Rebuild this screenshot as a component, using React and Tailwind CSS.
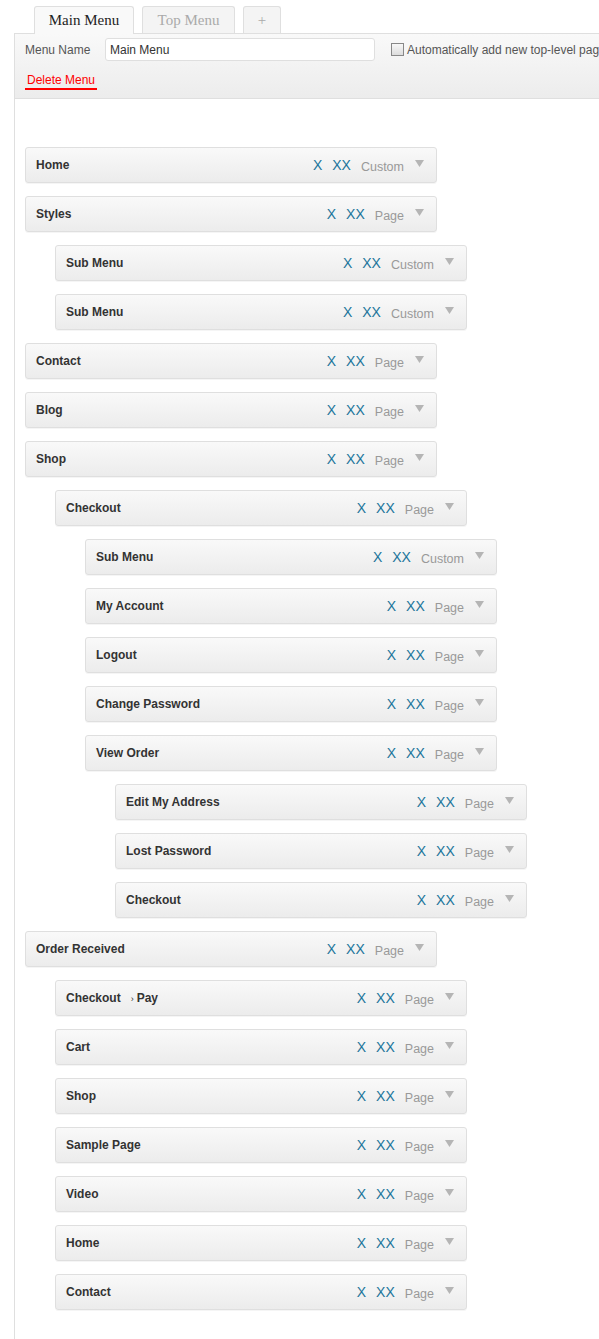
import React from "react";

const items = [
  [0, "Home", "Custom"],
  [0, "Styles", "Page"],
  [1, "Sub Menu", "Custom"],
  [1, "Sub Menu", "Custom"],
  [0, "Contact", "Page"],
  [0, "Blog", "Page"],
  [0, "Shop", "Page"],
  [1, "Checkout", "Page"],
  [2, "Sub Menu", "Custom"],
  [2, "My Account", "Page"],
  [2, "Logout", "Page"],
  [2, "Change Password", "Page"],
  [2, "View Order", "Page"],
  [3, "Edit My Address", "Page"],
  [3, "Lost Password", "Page"],
  [3, "Checkout", "Page"],
  [0, "Order Received", "Page"],
  [1, "Checkout|Pay", "Page"],
  [1, "Cart", "Page"],
  [1, "Shop", "Page"],
  [1, "Sample Page", "Page"],
  [1, "Video", "Page"],
  [1, "Home", "Page"],
  [1, "Contact", "Page"],
];

const indent = ["ml-0", "ml-[30px]", "ml-[60px]", "ml-[90px]"];

function MenuItem({ level, label, type }) {
  const [main, sub] = label.split("|");
  return (
    <div
      className={`${indent[level]} w-[412px] h-[36px] flex items-center pl-[10px] pr-[12px] border border-[#dfdfdf] rounded-[3px] bg-gradient-to-b from-[#f9f9f9] to-[#ececec] shadow-[0_1px_0_rgba(0,0,0,0.04)]`}
    >
      <div className="flex-1 text-[12px] font-bold text-[#333] leading-none">
        {main}
        {sub && (
          <>
            <span className="ml-[10px] mr-[3px] text-[9px] font-normal">›</span>
            {sub}
          </>
        )}
      </div>
      <span className="text-[14px] text-[#21759b] leading-none">X</span>
      <span className="ml-[10px] text-[14px] text-[#21759b] leading-none">XX</span>
      <span className="ml-[10px] mt-[4px] text-[12.5px] text-[#999] leading-none">{type}</span>
      <svg className="ml-[11px] -mt-[3px]" width="9" height="7" viewBox="0 0 9 7">
        <path d="M0 0 H9 L4.5 7 Z" fill="#b5b5b5" />
      </svg>
    </div>
  );
}

export default function App() {
  return (
    <div className="min-h-screen bg-white overflow-hidden font-['Liberation_Sans',Arial,sans-serif]">
      <div className="flex items-end gap-[8px] ml-[34px] pt-[6px] h-[33px] relative z-10">
        <div className="h-[28px] w-[100px] flex items-center justify-center border border-b-0 border-[#dfdfdf] rounded-t-[3px] bg-[#f9f9f9] font-['Liberation_Serif',Georgia,serif] text-[15px] text-[#222] -mb-px">
          Main Menu
        </div>
        <div className="h-[27px] w-[93px] flex items-center justify-center border border-b-0 border-[#dfdfdf] rounded-t-[3px] bg-[#f4f4f4] font-['Liberation_Serif',Georgia,serif] text-[15px] text-[#aaa]">
          Top Menu
        </div>
        <div className="h-[27px] w-[38px] flex items-center justify-center border border-b-0 border-[#dfdfdf] rounded-t-[3px] bg-[#f4f4f4] font-['Liberation_Serif',Georgia,serif] text-[15px] text-[#aaa]">
          +
        </div>
      </div>
      <div className="ml-[14px] border-l border-[#dfdfdf] min-h-[1306px]">
        <div className="h-[66px] border-t border-b border-[#dfdfdf] bg-gradient-to-b from-[#f9f9f9] to-[#ececec] pl-[10px] overflow-hidden">
          <div className="flex items-center pt-[4px] whitespace-nowrap">
            <span className="w-[80px] shrink-0 text-[12px] text-[#555]">Menu Name</span>
            <div className="w-[270px] shrink-0 h-[23px] flex items-center px-[4px] bg-white border border-[#dfdfdf] rounded-[3px] text-[12px] text-[#333]">
              Main Menu
            </div>
            <span className="ml-[16px] w-[13px] h-[13px] border border-[#888] bg-gradient-to-b from-[#f8f8f8] to-[#dcdcdc] shrink-0" />
            <span className="ml-[3px] shrink-0 text-[12px] text-[#555]">Automatically add new top-level pages</span>
          </div>
          <div className="mt-[12px] flex">
            <span className="px-[2px] pb-[1px] border-b-2 border-[#ff0000] text-[12px] text-[#ff0000] leading-[14px]">
              Delete Menu
            </span>
          </div>
        </div>
        <div className="pl-[10px] pt-[48px] flex flex-col gap-[13px]">
          {items.map(([level, label, type], i) => (
            <MenuItem key={i} level={level} label={label} type={type} />
          ))}
        </div>
      </div>
    </div>
  );
}
